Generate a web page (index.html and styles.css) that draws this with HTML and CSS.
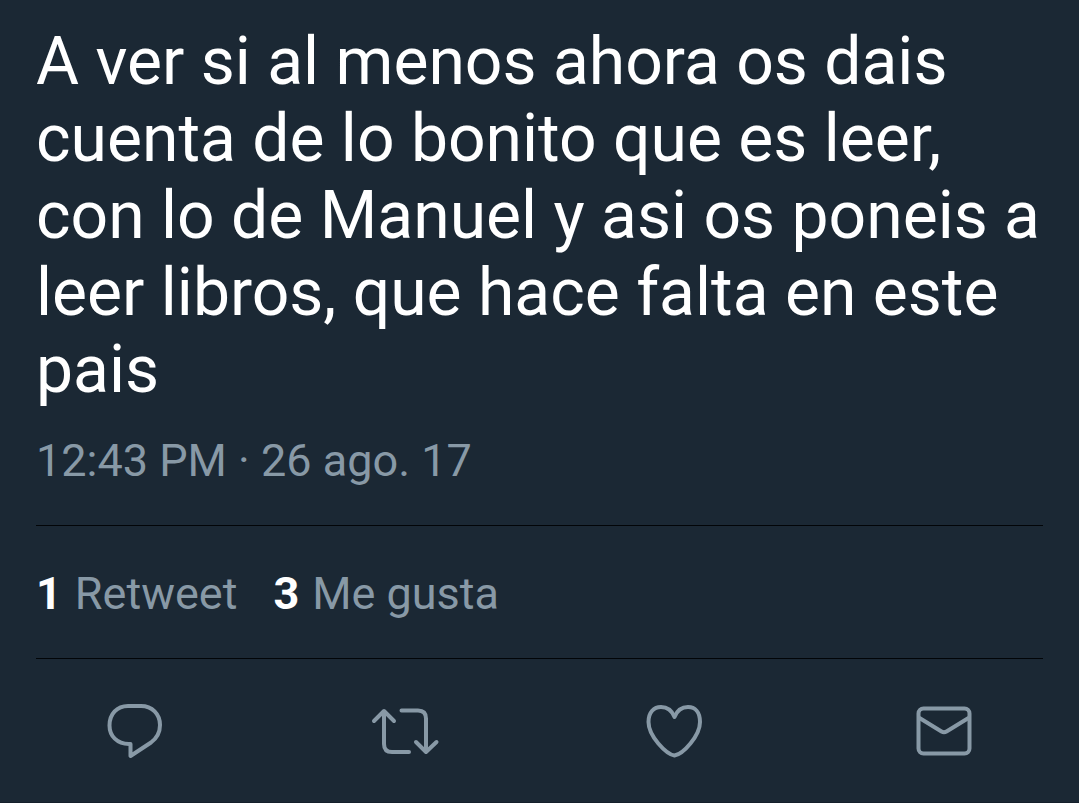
FILE: index.html
```html
<!DOCTYPE html>
<html lang="es">
<head>
<meta charset="utf-8">
<meta name="viewport" content="width=device-width, initial-scale=1">
<title>Tweet</title>
<link rel="stylesheet" href="styles.css">
</head>
<body>
<article class="tweet">
  <p class="tweet-text">A ver si al menos ahora os dais cuenta de lo bonito que es leer, con lo de Manuel y asi os poneis a leer libros, que hace falta en este pais</p>
  <time class="tweet-time" datetime="2017-08-26T12:43">12:43 PM · 26 ago. 17</time>
  <div class="stats">
    <a class="stat" href="#retweets"><strong class="count">1</strong> Retweet</a>
    <a class="stat" href="#likes"><strong class="count">3</strong> Me gusta</a>
  </div>
</article>
<div class="actions">
  <button class="action" type="button" aria-label="Responder">
    <svg class="icon" viewBox="0 0 90 80"><path d="M40.500 54H39C27 54 19.500 46 19.500 35.500C19.500 24 27 16 38 16H51C62 16 70 24 70 35C70 43 67 48 61 52.500L40.500 66Z"/></svg>
  </button>
  <button class="action" type="button" aria-label="Retwittear">
    <svg class="icon" viewBox="0 0 90 80"><path d="M14 31L24 21L34 31M24 22V54Q24 62 32 62H49M41.500 20.500H58Q66 20.500 66 28.500V61M56 52L66 62L76.500 52"/></svg>
  </button>
  <button class="action" type="button" aria-label="Me gusta">
    <svg class="icon" viewBox="0 0 90 80"><path d="M45.500 65.500C37 64 19.500 46 19.500 32C19.500 22 25 17 32 17C39 17 43.500 22 45.500 27C47.500 22 52 17 59 17C66 17 71 22 71 32C71 46 54 64 45.500 65.500Z"/></svg>
  </button>
  <button class="action" type="button" aria-label="Mensaje directo">
    <svg class="icon" viewBox="0 0 90 80"><rect x="19.500" y="18.500" width="51" height="45" rx="5"/><path d="M20.500 28L42.500 41.500Q45 43 47.500 41.500L69.500 28"/></svg>
  </button>
</div>
</body>
</html>
```
FILE: styles.css
```css
* { box-sizing: border-box; }
body {
  margin: 0;
  background: #1b2834;
  color: #fff;
  font-family: Roboto, "Noto Sans", sans-serif;
}
.tweet { padding: 23px 36px 0; }
.tweet-text { margin: 0; font-size: 66px; line-height: 77px; }
.tweet-time {
  display: block;
  padding: 25px 0 36px;
  color: #8899a6;
  font-size: 45px;
  line-height: 56px;
}
.stats {
  display: flex;
  gap: 36px;
  padding: 40px 0 36px;
  border-top: 1px solid #020508;
  border-bottom: 1px solid #020508;
  font-size: 45px;
  line-height: 56px;
}
.stat {
  display: flex;
  gap: 13px;
  color: #8899a6;
  text-decoration: none;
}
.count { color: #fff; font-weight: 700; }
.actions {
  display: grid;
  grid-template-columns: repeat(4, 1fr);
  padding: 31px 0 32px;
  border-bottom: 1px solid #141f2b;
}
.action {
  display: flex;
  justify-content: center;
  padding: 0;
  border: 0;
  background: none;
  color: #8899a6;
  cursor: pointer;
}
.icon {
  width: 90px;
  height: 80px;
  fill: none;
  stroke: currentColor;
  stroke-width: 4;
  stroke-linecap: round;
  stroke-linejoin: round;
}
```
